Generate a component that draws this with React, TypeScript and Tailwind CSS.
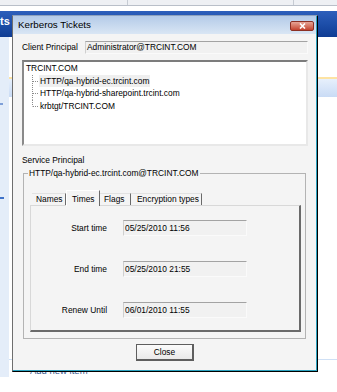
import type { ReactNode } from "react";

const font = "font-['Liberation_Sans',Arial,sans-serif]";

function ReadField({ value, className = "" }: { value: string; className?: string }) {
  return (
    <div
      className={`flex items-center whitespace-nowrap border border-t-[#a3a3a3] border-l-[#cfcfcf] border-r-[#fafafa] border-b-[#fafafa] bg-[#f1f1f1] pl-[1px] text-[8.4px] leading-none text-black ${className}`}
    >
      {value}
    </div>
  );
}

function TreeLink({ last }: { last?: boolean }) {
  return (
    <svg width="7" height="12.7" viewBox="0 0 7 12.7" className="shrink-0">
      <line x1="0.5" y1="0" x2="0.5" y2={last ? 6.5 : 12.7} stroke="#8a8a8a" strokeWidth="1" strokeDasharray="1 1" />
      <line x1="1" y1="6.5" x2="7" y2="6.5" stroke="#8a8a8a" strokeWidth="1" strokeDasharray="1 1" />
    </svg>
  );
}

function Tab({ children, active, className = "" }: { children: ReactNode; active?: boolean; className?: string }) {
  if (active) {
    return (
      <div
        className={`relative z-10 -mb-px flex h-[16px] items-start whitespace-nowrap border-l border-t border-r border-l-[#ffffff] border-t-[#ffffff] border-r-[#6a6a6a] bg-[#f4f4f4] pl-[5px] pt-[2px] ${className}`}
      >
        {children}
      </div>
    );
  }
  return (
    <div
      className={`flex h-[12px] items-center whitespace-nowrap border-t border-r border-t-[#e2e2e2] border-r-[#6a6a6a] bg-[#f4f4f4] pl-[4px] ${className}`}
    >
      {children}
    </div>
  );
}

function TimeRow({ label, value }: { label: string; value: string }) {
  return (
    <div className="flex h-[16px] items-center">
      <div className="w-[77px] pr-[1px] text-right">{label}</div>
      <ReadField value={value} className="ml-[15px] h-[16px] w-[124px]" />
    </div>
  );
}

export default function App() {
  return (
    <div className={`relative h-[392px] w-[337px] overflow-hidden bg-white ${font} text-[8.4px] text-black`}>
      {/* background application */}
      <div className="flex h-full flex-col">
        <div className="flex h-[6px] shrink-0 border-b border-[#b9bfc9] bg-[#eef0f4]">
          <div className="w-[128px] border-r border-[#c6cbd3]" />
          <div className="w-[166px] border-r border-[#c6cbd3]" />
        </div>
        <div className="h-[5px] shrink-0" />
        <div className="h-[26px] shrink-0 bg-gradient-to-b from-[#2d5fbb] via-[#1d4ea9] to-[#0f3c93] text-[11px] font-bold leading-[20px] text-white">
          ts
        </div>
        <div className="flex flex-1">
          <div className="mb-[15px] flex w-[9px] flex-col bg-[#e4edf9]">
            <div className="mt-[66px] h-[2px] w-[3px] bg-[#7fa0d8]" />
            <div className="mt-[92px] h-[2px] w-[4px] bg-[#3f72c9]" />
          </div>
          <div className="flex flex-1 flex-col">
            <div className="h-[40px]" />
            <div className="h-[2px] bg-[#fde3a3]" />
            <div className="h-[18px] bg-gradient-to-b from-[#e7f0fc] to-[#c9dbf5]" />
            <div className="h-[262px]" />
            <div className="h-px bg-[#cfe0f5]" />
            <div className="mt-[6px] pl-[21px] text-[9.5px] leading-[10px] text-[#3c5e92]">Add new item</div>
          </div>
        </div>
      </div>

      {/* dialog window */}
      <div className="absolute left-[12px] top-[15px] flex h-[357px] w-[306px] flex-col border border-l-[#6e6e6e] border-t-[#8ea2bd] border-r-black border-b-black">
        <div className="flex flex-1 flex-col border-r border-b border-[#2ba2bf]">
          <div className="flex h-[18px] shrink-0 items-center justify-between bg-gradient-to-b from-[#b4cbe8] to-[#d9e6f4] pl-[5px] pr-[2px]">
            <span className="text-[9.8px] text-black">Kerberos Tickets</span>
            <div className="mt-[2px] flex h-[10px] w-[24px] items-center justify-center rounded-[2px] border border-[#8c3024] bg-gradient-to-b from-[#e6a496] to-[#c3412d]">
              <svg width="7" height="6" viewBox="0 0 7 6">
                <path d="M1 0.5 L6 5.5 M6 0.5 L1 5.5" stroke="white" strokeWidth="1.6" />
              </svg>
            </div>
          </div>

          <div className="flex flex-1 flex-col bg-[#f4f4f4] pl-[9px] pr-[8px] pt-[7px]">
            {/* client principal */}
            <div className="flex h-[13px] items-center">
              <div className="w-[63px] whitespace-nowrap">Client Principal</div>
              <ReadField value="Administrator@TRCINT.COM" className="h-[13px] flex-1" />
            </div>

            {/* ticket tree */}
            <div className="mt-[6px] h-[86px] whitespace-nowrap border-2 border-t-[#7c7c7c] border-l-[#8a8a8a] border-r-[#e8e8e8] border-b-[#e8e8e8] bg-white leading-[12.7px]">
              <div className="pl-[2px]">TRCINT.COM</div>
              <div className="pl-[8px]">
                <div className="flex items-center">
                  <TreeLink />
                  <span className="bg-[#efefef] px-[1px]">HTTP/qa-hybrid-ec.trcint.com</span>
                </div>
                <div className="flex items-center">
                  <TreeLink />
                  <span className="px-[1px]">HTTP/qa-hybrid-sharepoint.trcint.com</span>
                </div>
                <div className="flex items-center">
                  <TreeLink last />
                  <span className="px-[1px]">krbtgt/TRCINT.COM</span>
                </div>
              </div>
            </div>

            <div className="mt-[9px] leading-[10px]">Service Principal</div>

            {/* service principal group */}
            <fieldset className="ml-[1px] mt-[3px] w-[283px] border border-[#b3b3b3] pb-[6px] pt-[12px]">
              <legend className="ml-[4px] whitespace-nowrap px-[1px] leading-[10px]">HTTP/qa-hybrid-ec.trcint.com@TRCINT.COM</legend>

              <div className="flex h-[15px] items-end pl-[8px]">
                <Tab className="w-[34px]">Names</Tab>
                <Tab active className="w-[34px]">
                  Times
                </Tab>
                <Tab className="w-[31px]">Flags</Tab>
                <Tab className="w-[71px] pl-[6px]">Encryption types</Tab>
              </div>

              <div className="ml-[6px] mr-[4px] h-[127px] border border-t-[#d8d8d8] border-l-[#d8d8d8] border-r-2 border-b-2 border-r-[#6a6a6a] border-b-[#6a6a6a] pt-[14px]">
                <div className="flex flex-col gap-[25px]">
                  <TimeRow label="Start time" value="05/25/2010 11:56" />
                  <TimeRow label="End time" value="05/25/2010 21:55" />
                  <TimeRow label="Renew Until" value="06/01/2010 11:55" />
                </div>
              </div>
            </fieldset>

            <div className="mt-[5px] flex justify-center">
              <button
                type="button"
                className="h-[17px] w-[58px] border border-[#5e5e5e] border-r-2 border-b-2 bg-gradient-to-b from-[#fbfbfb] to-[#e9e9e9] leading-none text-black"
              >
                Close
              </button>
            </div>
          </div>
        </div>
      </div>
    </div>
  );
}
